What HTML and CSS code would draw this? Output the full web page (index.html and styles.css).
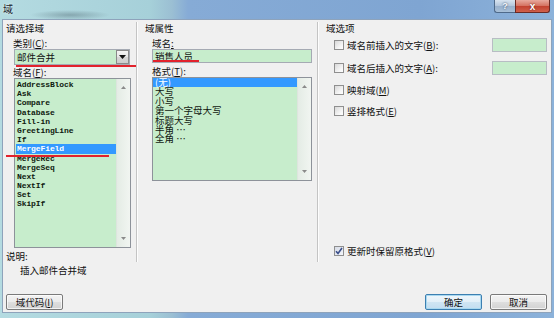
FILE: index.html
```html
<!DOCTYPE html>
<html lang="zh-CN">
<head>
  <meta charset="UTF-8" />
  <title>域</title>
  <link rel="stylesheet" href="styles.css">
</head>
<body>
  <div class="window">
    <div class="titlebar">
      <span class="caption">域</span>
      <div class="caption-btns">
        <span class="cap-help">?</span>
        <span class="cap-close">x</span>
      </div>
    </div>

    <div class="client">
      <div class="panes">
        <div class="pane pane-left">
          <div class="group-title">请选择域</div>
          <div class="label">类别(<u>C</u>):</div>
          <div class="combo">
            <span class="combo-text">邮件合并</span>
            <span class="combo-btn">
              <svg width="7" height="4" viewBox="0 0 7 4"><path d="M0 0h7L3.5 4z" fill="#111"/></svg>
            </span>
            <span class="mark mark-combo"></span>
          </div>
          <div class="label label-gap">域名(<u>F</u>):</div>
          <div class="listbox list-fields">
            <ul class="items mono">
              <li>AddressBlock</li>
              <li>Ask</li>
              <li>Compare</li>
              <li>Database</li>
              <li>Fill-in</li>
              <li>GreetingLine</li>
              <li>If</li>
              <li class="sel">MergeField</li>
              <li>MergeRec</li>
              <li>MergeSeq</li>
              <li>Next</li>
              <li>NextIf</li>
              <li>Set</li>
              <li>SkipIf</li>
            </ul>
            <div class="vscroll">
              <svg width="5" height="3" viewBox="0 0 5 3"><path d="M0 3h5L2.5 0z" fill="#8a8a8a"/></svg>
              <svg width="5" height="3" viewBox="0 0 5 3"><path d="M0 0h5L2.5 3z" fill="#8a8a8a"/></svg>
            </div>
            <span class="mark mark-field"></span>
          </div>
          <div class="desc-title">说明:</div>
          <div class="desc">插入邮件合并域</div>
        </div>

        <div class="sep"></div>

        <div class="pane pane-mid">
          <div class="group-title">域属性</div>
          <div class="label">域名<u>:</u></div>
          <div class="textbox">
            <span>销售人员</span>
            <span class="mark mark-name"></span>
          </div>
          <div class="label label-gap2">格式(<u>T</u>):</div>
          <div class="listbox list-format">
            <ul class="items cjk-items">
              <li class="sel">(无)</li>
              <li>大写</li>
              <li>小写</li>
              <li>第一个字母大写</li>
              <li>标题大写</li>
              <li>半角 …</li>
              <li>全角 …</li>
            </ul>
            <div class="vscroll">
              <svg width="5" height="3" viewBox="0 0 5 3"><path d="M0 3h5L2.5 0z" fill="#8a8a8a"/></svg>
              <svg width="5" height="3" viewBox="0 0 5 3"><path d="M0 0h5L2.5 3z" fill="#8a8a8a"/></svg>
            </div>
          </div>
        </div>

        <div class="sep"></div>

        <div class="pane pane-right">
          <div class="group-title">域选项</div>
          <div class="opt opt-1">
            <span class="check"></span>
            <span class="opt-text">域名前插入的文字(<u>B</u>):</span>
            <span class="opt-input"></span>
          </div>
          <div class="opt opt-2">
            <span class="check"></span>
            <span class="opt-text">域名后插入的文字(<u>A</u>):</span>
            <span class="opt-input"></span>
          </div>
          <div class="opt opt-3">
            <span class="check"></span>
            <span class="opt-text">映射域(<u>M</u>)</span>
          </div>
          <div class="opt opt-4">
            <span class="check"></span>
            <span class="opt-text">竖排格式(<u>E</u>)</span>
          </div>
          <div class="opt opt-5">
            <span class="check checked">
              <svg width="8" height="8" viewBox="0 0 8 8"><path d="M1 4.2l2 2.2L7 1" fill="none" stroke="#3b4f8a" stroke-width="1.6"/></svg>
            </span>
            <span class="opt-text">更新时保留原格式(<u>V</u>)</span>
          </div>
        </div>
      </div>

      <div class="footer">
        <button class="btn">域代码(<u>I</u>)</button>
        <div class="footer-right">
          <button class="btn btn-default">确定</button>
          <button class="btn">取消</button>
        </div>
      </div>
    </div>
  </div>
</body>
</html>
```

FILE: styles.css
```css
* { box-sizing: border-box; }
html, body {
  margin: 0;
  padding: 0;
  width: 554px;
  height: 318px;
  overflow: hidden;
}
body {
  font-family: "Noto Sans CJK SC", "Liberation Sans", sans-serif;
  font-size: 9.5px;
  color: #111;
}
u { text-decoration: underline; text-underline-offset: 1px; }

.window {
  width: 554px;
  height: 318px;
  display: flex;
  flex-direction: column;
  background: linear-gradient(to right, #b4dbe1 0, #a6d0d9 150px, #9bbfd3 172px, #86abd6 188px, #7fa5d2 420px, #8cb2da 554px);
}

/* title bar */
.titlebar {
  height: 19px;
  display: flex;
  align-items: flex-start;
  background: radial-gradient(ellipse 40px 5px at 70px 15px, rgba(60,80,90,0.35), rgba(60,80,90,0));
}
.caption {
  margin: 3px 0 0 3px;
  font-size: 10px;
  line-height: 12px;
  color: #1c2530;
  text-shadow: 0 0 3px rgba(255,255,255,0.8);
}
.caption-btns {
  margin-left: auto;
  margin-right: 4px;
  display: flex;
}
.cap-help, .cap-close {
  height: 13px;
  display: flex;
  align-items: center;
  justify-content: center;
  font-family: "Liberation Sans", sans-serif;
  font-weight: bold;
  color: #fff;
  border: 1px solid #4f6a8a;
  border-top: none;
}
.cap-help {
  width: 21px;
  font-size: 9px;
  border-radius: 0 0 0 3px;
  border-right: none;
  background: linear-gradient(#d8e4f0, #b3c6dc 50%, #98b0cc 51%, #a8c0d8);
  color: #f4f8fc;
  text-shadow: 0 0 2px #23364d;
}
.cap-close {
  width: 35px;
  font-size: 10px;
  border-color: #6a2a24;
  border-radius: 0 0 3px 0;
  background: linear-gradient(#e8a99e, #d4705f 50%, #c2412f 51%, #d0614c);
  text-shadow: 0 0 2px #5a120a;
}

/* client area */
.client {
  flex: 1;
  margin: 0 2px 5px 2px;
  background: #f0f0f0;
  border: 1px solid #8ea3bb;
  display: flex;
  flex-direction: column;
}
.panes {
  display: flex;
  height: 258px;
}
.pane { padding-top: 2px; }
.sep {
  width: 2px;
  height: 240px;
  margin-top: 2px;
  border-left: 1px solid #c4c4c4;
  border-right: 1px solid #fdfdfd;
}
.pane-left { width: 133px; padding-left: 3px; }
.pane-mid { width: 179px; padding-left: 7px; }
.pane-right { flex: 1; padding-left: 7px; padding-right: 4px; }

.group-title { line-height: 12px; height: 12px; }
.label {
  margin-top: 4px;
  line-height: 11px;
  height: 11px;
  padding-left: 7px;
}
.label-gap { margin-top: 2px; }
.label-gap2 { margin-top: 3px; }

/* red annotation marks */
.mark {
  position: absolute;
  height: 2px;
  background: #e2222c;
}
.mark-combo { left: 1px; right: -7px; bottom: -3px; }
.mark-field { left: -9px; width: 103px; top: 76px; }
.mark-name { left: 0; width: 46px; bottom: 0; }

/* combo box */
.combo {
  position: relative;
  margin-left: 8px;
  width: 116px;
  height: 16px;
  background: #c7edcc;
  border: 1px solid #a5aab3;
  display: flex;
  align-items: center;
  padding-left: 2px;
}
.combo-text { flex: 1; line-height: 12px; }
.combo-btn {
  width: 13px;
  height: 14px;
  display: flex;
  align-items: center;
  justify-content: center;
  border: 1px solid #8a8a8a;
  background: linear-gradient(#f4f4f4, #e6e6e6 50%, #d6d6d6 51%, #cdcdcd);
}

/* list boxes */
.listbox {
  position: relative;
  display: flex;
  background: #c7edcc;
  border: 1px solid #8d929a;
}
.list-fields {
  margin-left: 8px;
  width: 117px;
  height: 170px;
  padding: 1px 0 0 1px;
}
.list-format {
  width: 160px;
  height: 104px;
  margin-left: 7px;
}
.items {
  list-style: none;
  margin: 0;
  padding: 0;
  flex: 1;
}
.items li { white-space: nowrap; padding-left: 1px; }
.items li.sel { background: #3399ff; color: #fff; }
.mono li {
  font-family: "Liberation Mono", monospace;
  font-weight: bold;
  font-size: 8px;
  line-height: 9.2px;
  height: 9.2px;
  letter-spacing: -0.1px;
  color: #0f1a0f;
}
.cjk-items li {
  font-size: 9.5px;
  line-height: 9.4px;
  height: 9.4px;
  padding-left: 2px;
  color: #101810;
}
.vscroll {
  width: 14px;
  display: flex;
  flex-direction: column;
  justify-content: space-between;
  align-items: center;
  padding: 7px 0;
  background: linear-gradient(to right, #e4ece5, #f1f5f1);
  border-left: 1px solid #dde5de;
}
.list-fields .vscroll { margin-top: -1px; }

/* text box */
.textbox {
  position: relative;
  margin-left: 7px;
  width: 160px;
  height: 14px;
  background: #c7edcc;
  border: 1px solid #a5aab3;
  padding-left: 2px;
  line-height: 12px;
}

.desc-title { margin-top: 2px; line-height: 12px; }
.desc { margin-top: 2px; line-height: 12px; padding-left: 14px; }

/* options */
.opt {
  display: flex;
  align-items: center;
  height: 14px;
  padding-left: 8px;
}
.opt-1 { margin-top: 4px; }
.opt-2 { margin-top: 9px; }
.opt-3 { margin-top: 8px; }
.opt-4 { margin-top: 7px; }
.opt-5 { margin-top: 126px; }
.check {
  width: 10px;
  height: 10px;
  border: 1px solid #8f8f8f;
  background: linear-gradient(135deg, #d8d8d8, #f7f7f7 70%, #ffffff);
  margin-right: 3px;
  display: flex;
  align-items: center;
  justify-content: center;
}
.check.checked { background: linear-gradient(135deg, #d6dbe6, #f4f6fa); }
.opt-text { line-height: 12px; white-space: nowrap; }
.opt-input {
  margin-left: auto;
  width: 55px;
  height: 14px;
  background: #c7edcc;
  border: 1px solid #b8bdc4;
}

/* footer */
.footer {
  flex: 1;
  display: flex;
  align-items: flex-start;
  padding: 16px 4px 0 3px;
}
.footer-right {
  margin-left: auto;
  display: flex;
  gap: 8px;
}
.btn {
  width: 57px;
  height: 16px;
  padding: 0;
  font-family: "Noto Sans CJK SC", sans-serif;
  font-size: 9.5px;
  line-height: 12px;
  color: #111;
  border: 1px solid #7a7a7a;
  border-radius: 2px;
  background: linear-gradient(#f3f3f3, #ebebeb 50%, #dedede 51%, #d2d2d2);
  box-shadow: inset 0 0 0 1px rgba(255,255,255,0.7);
}
.btn-default {
  border-color: #3c7fb1;
  background: linear-gradient(#eef6fb, #e2eff8 50%, #cfe5f3 51%, #c3ddf0);
  box-shadow: inset 0 0 0 1px #a8d8f0;
}
```
